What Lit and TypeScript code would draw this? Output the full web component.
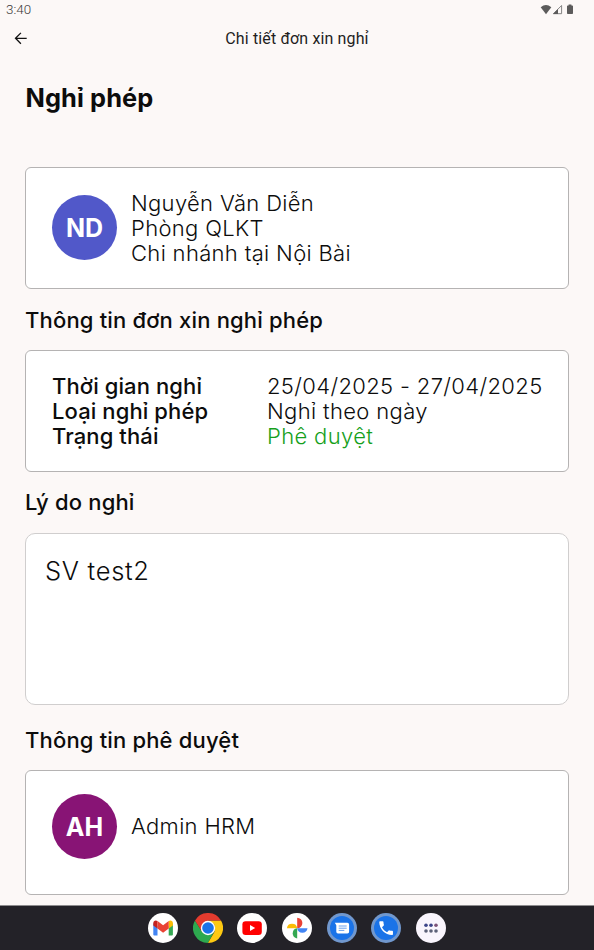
import { css, html, LitElement, svg } from 'lit'
import { customElement, property } from 'lit/decorators.js'

const dockIcons = [
    {
        name: 'Gmail',
        art: svg`
            <circle cx="15" cy="15" r="15" fill="#fff"/>
            <path d="M5.3 10.2v11.2q0 1 1 1h3.2v-9.3z" fill="#4285f4"/>
            <path d="M24.9 10.2v11.2q0 1-1 1h-3.2v-9.3z" fill="#34a853"/>
            <path d="M5.3 12.4V10c0-2.3 2.4-3.2 4.2-1.9v7.5z" fill="#c5221f"/>
            <path d="M24.9 12.4V10c0-2.3-2.4-3.2-4.2-1.9v7.5z" fill="#fbbc04"/>
            <path d="M9.5 8.1l5.6 4.2 5.6-4.2v7.4l-5.6 4.2-5.6-4.2z" fill="#ea4335"/>`
    },
    {
        name: 'Chrome',
        art: svg`
            <path d="M2 7.5A15 15 0 0 0 15 30L21.2 18.6 15 15 8.8 18.6z" fill="#2da94f"/>
            <path d="M28 7.5A15 15 0 0 1 15 30L21.5 18.8 21.2 11.3 15 7.5z" fill="#fdc912"/>
            <path d="M2 7.5A15 15 0 0 1 28 7.5H15L8.8 18.6z" fill="#e33b2e"/>
            <circle cx="15" cy="15" r="7.2" fill="#fff"/>
            <circle cx="15" cy="15" r="5.8" fill="#1a73e8"/>`
    },
    {
        name: 'YouTube',
        art: svg`
            <circle cx="15" cy="15" r="15" fill="#fff"/>
            <rect x="5.4" y="8.2" width="19.4" height="13.8" rx="3.2" fill="#f00"/>
            <path d="M13 12.1v6l5.2-3z" fill="#fff"/>`
    },
    {
        name: 'Photos',
        art: svg`
            <circle cx="15" cy="15" r="15" fill="#fff"/>
            <path d="M15.2 4.8A5.2 5.2 0 0 1 15.2 15.2z" fill="#ea4335"/>
            <path d="M4.9 15.2A5.2 5.2 0 0 1 15.2 15.2z" fill="#fbbc04"/>
            <path d="M15.2 25.5A5.2 5.2 0 0 1 15.2 15.2z" fill="#34a853"/>
            <path d="M25.5 15.2A5.2 5.2 0 0 1 15.2 15.2z" fill="#4285f4"/>`
    },
    {
        name: 'Messages',
        art: svg`
            <circle cx="15" cy="15" r="15" fill="#7198ce"/>
            <circle cx="15" cy="15" r="12" fill="#1a73e8"/>
            <path d="M7.8 9.7H20.4q1.7 0 1.7 1.7v7.4q0 1.7-1.7 1.7H11q-1.7 0-1.7-1.7v-6.6z" fill="#fff"/>
            <path d="M11.7 13h8M11.7 15.2h8M11.7 17.4h5.6" stroke="#6ba1ee" stroke-width="1"/>`
    },
    {
        name: 'Phone',
        art: svg`
            <circle cx="15" cy="15" r="15" fill="#7198ce"/>
            <circle cx="15" cy="15" r="12" fill="#1a73e8"/>
            <path transform="translate(6 6) scale(.76)" d="M6.6 10.8c1.4 2.8 3.8 5.1 6.6 6.6l2.2-2.2c.3-.3.7-.4 1-.2 1.1.4 2.3.6 3.6.6.6 0 1 .4 1 1V20c0 .6-.4 1-1 1C10.6 21 3 13.4 3 4c0-.6.4-1 1-1h3.5c.6 0 1 .4 1 1 0 1.3.2 2.5.6 3.6.1.3 0 .7-.2 1z" fill="#fff"/>`
    },
    {
        name: 'All apps',
        art: svg`
            <circle cx="15" cy="15" r="15" fill="#f9f5fd"/>
            <g fill="#3c4489"><circle cx="10" cy="12.2" r="1.8"/><circle cx="15" cy="12.2" r="1.8"/></g>
            <circle cx="20" cy="12.2" r="1.8" fill="#7c5279"/>
            <g fill="#5c6178"><circle cx="10" cy="18" r="1.8"/><circle cx="15" cy="18" r="1.8"/><circle cx="20" cy="18" r="1.8"/></g>`
    }
]

@customElement('status-bar')
export class StatusBar extends LitElement {

    static styles = css`
        :host {
            display: flex;
            align-items: center;
            justify-content: space-between;
            height: 19px;
            padding: 0 20px 0 6px;
            font-family: Roboto, sans-serif;
            font-size: 13.4px;
            font-weight: 300;
            line-height: 15px;
            color: #3c3a3a;
        }

        svg {
            display: block;
        }
    `

    render () {
        return html`
            <span>3:40</span>
            <svg width="34" height="12" viewBox="0 0 34 12">
                <path d="M.7 3.2Q6-1.4 11.3 3.2L6 10.2z" fill="#5c5b5b"/>
                <path d="M13.4 9.7L21.6 1.5V9.7z" fill="none" stroke="#777" stroke-width=".9"/>
                <path d="M13 10l5-5v5z" fill="#5c5b5b"/>
                <path d="M27 2.3q0-.8.8-.8h.8V.6h2.8v.9h.8q.8 0 .8.8v7q0 .8-.8.8h-4.4q-.8 0-.8-.8z" fill="#5c5b5b"/>
            </svg>
        `
    }
}

@customElement('person-card')
export class PersonCard extends LitElement {

    static styles = css`
        :host {
            display: flex;
            align-items: center;
            gap: 14px;
        }

        .avatar {
            display: flex;
            flex: none;
            align-items: center;
            justify-content: center;
            width: 65px;
            height: 65px;
            border-radius: 50%;
            font-size: 25px;
            font-weight: 700;
            color: #fff;
        }

        .lines {
            padding-top: 1px;
            font-size: 22px;
            font-weight: 300;
            line-height: 25.3px;
            letter-spacing: 0.33px;
        }
    `

    @property() initials = ''
    @property() color = ''
    @property({ type: Array }) lines: string[] = []

    render () {
        return html`
            <span class="avatar" style="background:${this.color}">${this.initials}</span>
            <div class="lines">${this.lines.map(line => html`<div>${line}</div>`)}</div>
        `
    }
}

@customElement('app-dock')
export class AppDock extends LitElement {

    static styles = css`
        :host {
            display: flex;
            align-items: center;
            justify-content: center;
            gap: 14.6px;
            box-sizing: border-box;
            height: 45px;
            border-top: 1px solid #8d8c8e;
            background: #232228;
        }

        svg {
            display: block;
        }
    `

    render () {
        return dockIcons.map(icon => html`
            <svg width="30" height="30" viewBox="0 0 30 30" role="img" aria-label=${icon.name}>${icon.art}</svg>
        `)
    }
}

@customElement('app-root')
export class AppRoot extends LitElement {

    static styles = css`
        :host {
            display: flex;
            flex-direction: column;
            box-sizing: border-box;
            height: 950px;
            overflow: hidden;
            background: #fcf8f7;
            color: #0c0c0c;
            font-family: Inter, "Liberation Sans", sans-serif;
            white-space: nowrap;
        }

        .toolbar {
            display: grid;
            grid-template-columns: 42px 1fr 42px;
            align-items: center;
            height: 38px;
        }

        .toolbar svg {
            display: block;
            margin-left: 14px;
        }

        .toolbar span {
            font-family: Roboto, sans-serif;
            font-size: 16px;
            text-align: center;
            letter-spacing: 0.13px;
            color: #1f1e1e;
        }

        main {
            display: flex;
            flex: 1;
            flex-direction: column;
            padding: 0 25px;
        }

        h1 {
            margin: 0;
            height: 110px;
            padding-left: 0.5px;
            font-size: 25.4px;
            font-weight: 700;
            line-height: 82px;
            letter-spacing: 0.1px;
        }

        h2 {
            margin: 0;
            height: 61px;
            font-size: 22px;
            font-weight: 500;
            line-height: 61px;
            letter-spacing: 0.17px;
        }

        h2.first {
            line-height: 63px;
        }

        h2.last {
            height: 65px;
            line-height: 70px;
        }

        .card {
            display: flex;
            align-items: center;
            box-sizing: border-box;
            height: 122px;
            padding: 0 26px;
            border: 1px solid #b5b3b3;
            border-radius: 6px;
            background: #fff;
        }

        .details {
            display: grid;
            grid-template-columns: 215px auto;
            margin: 0;
            padding-top: 1px;
            font-size: 22px;
            font-weight: 300;
            line-height: 25.3px;
            letter-spacing: 0.35px;
        }

        .details dt {
            font-weight: 500;
            letter-spacing: 0.1px;
        }

        .details dd {
            margin: 0;
        }

        .details .approved {
            color: #16a01c;
        }

        .reason {
            box-sizing: border-box;
            height: 172px;
            padding: 22px 19px;
            border: 1px solid #d0cece;
            border-radius: 10px;
            background: #fff;
            font-size: 25.5px;
            font-weight: 300;
            line-height: 30px;
            letter-spacing: 0.7px;
        }

        .approver {
            align-items: flex-start;
            height: 125px;
            padding-top: 23px;
        }
    `

    render () {
        return html`
            <status-bar></status-bar>
            <div class="toolbar">
                <svg width="14" height="14" viewBox="0 0 14 14" fill="none" stroke="#111" stroke-width="1.3">
                    <path d="M12.7 7.3H1.8M6.9 1.9L1.5 7.3l5.4 5.4"/>
                </svg>
                <span>Chi tiết đơn xin nghỉ</span>
            </div>
            <main>
                <h1>Nghỉ phép</h1>
                <div class="card">
                    <person-card
                        initials="ND"
                        color="#5158c9"
                        .lines=${['Nguyễn Văn Diễn', 'Phòng QLKT', 'Chi nhánh tại Nội Bài']}
                    ></person-card>
                </div>
                <h2 class="first">Thông tin đơn xin nghỉ phép</h2>
                <div class="card">
                    <dl class="details">
                        <dt>Thời gian nghỉ</dt>
                        <dd>25/04/2025 - 27/04/2025</dd>
                        <dt>Loại nghỉ phép</dt>
                        <dd>Nghỉ theo ngày</dd>
                        <dt>Trạng thái</dt>
                        <dd class="approved">Phê duyệt</dd>
                    </dl>
                </div>
                <h2>Lý do nghỉ</h2>
                <div class="reason">SV test2</div>
                <h2 class="last">Thông tin phê duyệt</h2>
                <div class="card approver">
                    <person-card initials="AH" color="#881475" .lines=${['Admin HRM']}></person-card>
                </div>
            </main>
            <app-dock></app-dock>
        `
    }
}
